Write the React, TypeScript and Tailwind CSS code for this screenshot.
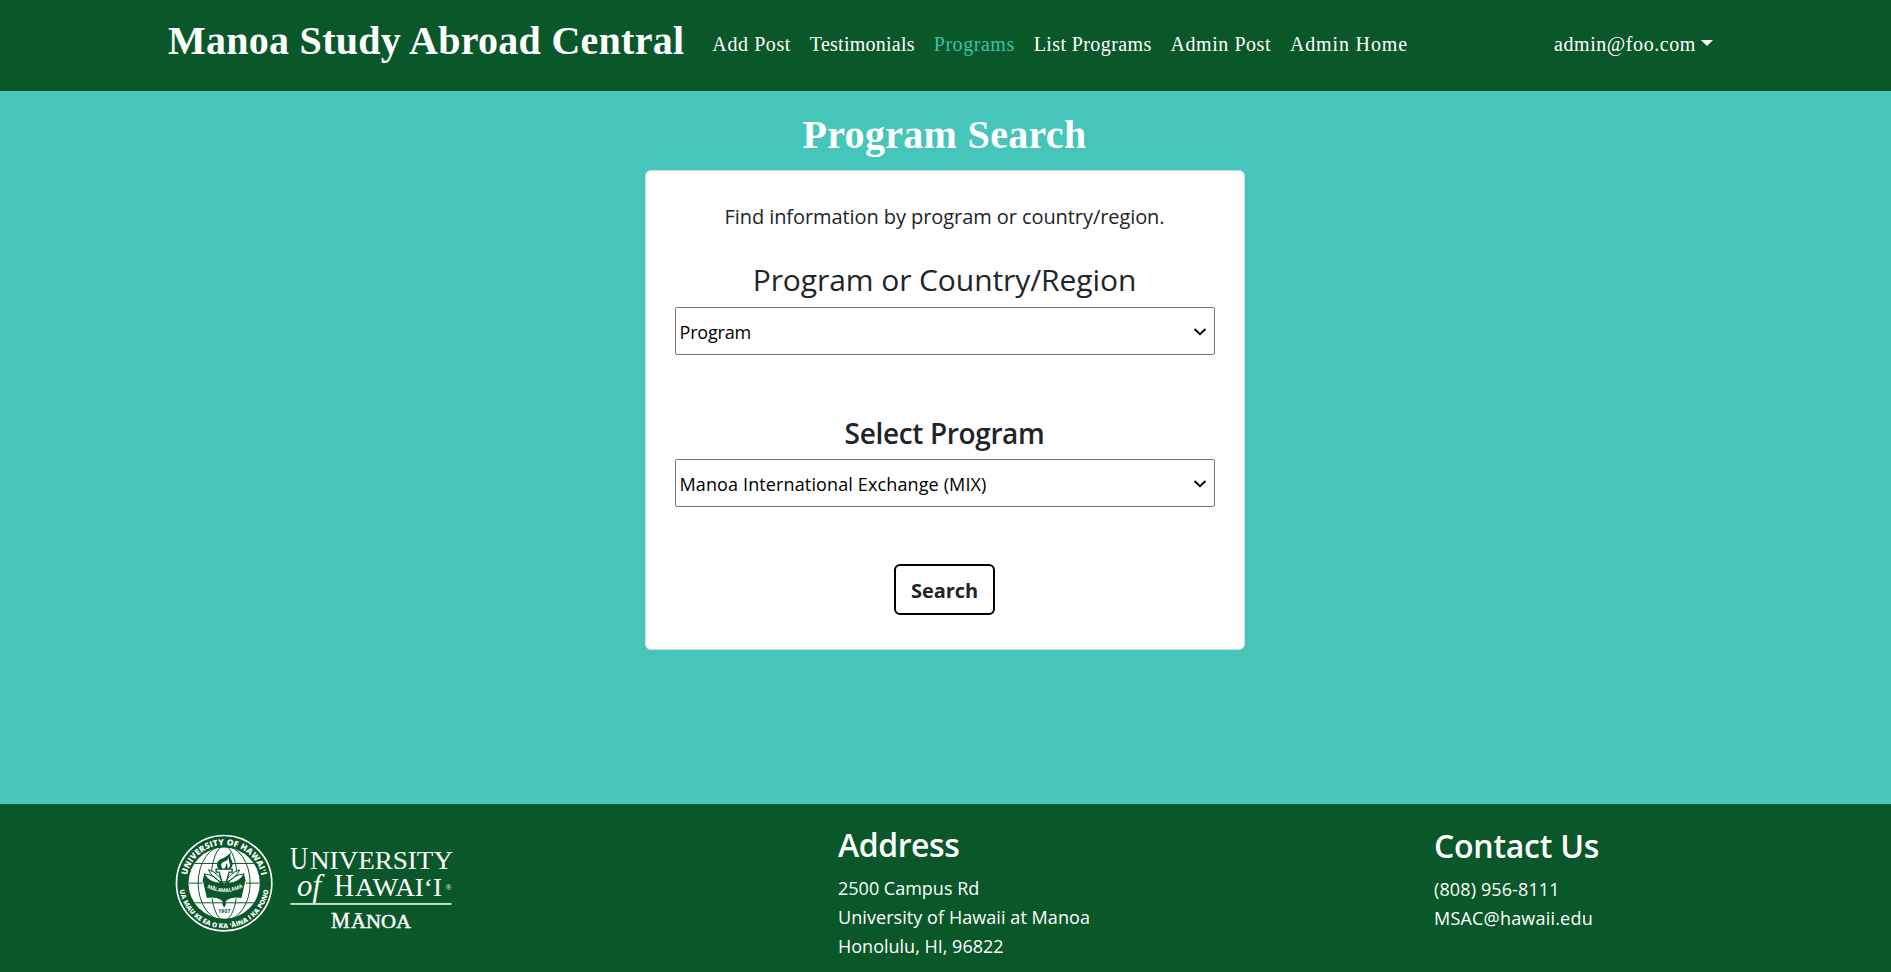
import React from "react";

const links = [
  { label: "Add Post", cls: "tracking-[0.587px] text-white" },
  { label: "Testimonials", cls: "tracking-[0.256px] text-white" },
  { label: "Programs", cls: "tracking-[0.542px] text-[#3fbfa8]" },
  { label: "List Programs", cls: "tracking-[0.402px] text-white" },
  { label: "Admin Post", cls: "tracking-[0.548px] text-white" },
  { label: "Admin Home", cls: "tracking-[0.857px] text-white" },
];

function NavBar() {
  return (
    <header className="flex h-[91px] items-start bg-[#0a5829] pl-[168px] font-['Liberation_Serif',serif] text-white">
      <a className="mt-[17px] text-[40px] leading-[48px] font-bold tracking-[0.27px] whitespace-nowrap">
        Manoa Study Abroad Central
      </a>
      <nav className="mt-[29px] ml-7 flex gap-[18.9px] text-xl leading-[30px] whitespace-nowrap">
        {links.map((l) => (
          <a key={l.label} className={l.cls}>
            {l.label}
          </a>
        ))}
      </nav>
      <button className="mt-[29px] mr-[178px] ml-auto flex text-xl leading-[30px] tracking-[0.577px]">
        admin@foo.com
        <span className="mt-[11px] ml-[5px] h-0 w-0 border-x-6 border-t-6 border-x-transparent border-t-white" />
      </button>
    </header>
  );
}

function SelectBox({ value, cls }: { value: string; cls: string }) {
  return (
    <div className="flex h-12 items-center justify-between rounded-[2px] border border-[#767676] bg-white pr-[7px] pl-1 text-lg text-black">
      <span className={cls}>{value}</span>
      <svg className="mt-px" width="14" height="10" viewBox="0 0 14 10" fill="none" stroke="black" strokeWidth="2">
        <path d="M1.5 2 L7 7.2 L12.5 2" />
      </svg>
    </div>
  );
}

function Seal() {
  return (
    <g transform="translate(-0.2 -0.2) scale(0.33333)">
      <defs>
        <path id="arc-top" d="M49 166 A114 114 0 0 1 277 166" />
        <path id="arc-bottom" d="M28 166 A135 135 0 0 0 298 166" />
        <clipPath id="globe">
          <circle cx="163" cy="166" r="107" />
        </clipPath>
      </defs>
      <circle cx="163" cy="166" r="143" fill="none" stroke="white" strokeWidth="5" />
      <circle cx="163" cy="166" r="107" fill="white" />
      <g clipPath="url(#globe)" fill="none" stroke="#0a5829" strokeWidth="3">
        <path d="M70 107H256M56 166H270M70 225H256" />
        <ellipse cx="163" cy="166" rx="78" ry="112" />
        <ellipse cx="163" cy="166" rx="40" ry="112" />
      </g>
      <path d="M102 138 L98 160 L110 212 Q146 206 163 226 Q180 206 216 212 L228 160 L224 138 L163 166Z" fill="#0a5829" stroke="white" strokeWidth="3" />
      <path d="M98 160 Q140 158 163 180 Q186 158 228 160 L222 138 Q188 146 163 168 Q138 146 104 138Z" fill="#0a5829" />
      <path d="M116 126 Q148 136 158 164 Q128 152 116 126Z M210 126 Q178 136 168 164 Q198 152 210 126Z M103 138 Q138 142 152 167 Q116 164 103 138Z M223 138 Q188 142 174 167 Q210 164 223 138Z" fill="white" stroke="#0a5829" strokeWidth="3" />
      <path d="M139 124 H187 V133 H178 L170 162 H156 L148 133 H139Z" fill="white" stroke="#0a5829" strokeWidth="4" />
      <path d="M146 124 Q134 104 152 94 Q172 88 184 72 Q178 86 186 98 Q194 114 180 124Z" fill="#0a5829" />
      <path d="M158 122 Q148 108 162 102 Q176 98 177 88 Q176 100 180 108 Q184 118 172 122 Q176 112 169 106 Q170 114 164 122Z" fill="white" />
      <path id="motto-line" d="M108 178 Q163 208 220 178" fill="none" />
      <text fontSize="16" fontWeight="700" fill="white" fontFamily="Open Sans, sans-serif">
        <textPath href="#motto-line" startOffset="4" textLength="112" lengthAdjust="spacingAndGlyphs">MĀLAMALAMA</textPath>
      </text>
      <path d="M158 212 L163 216 L168 212 V230 L163 240 L158 230Z" fill="#0a5829" />
      <rect x="143" y="242" width="40" height="17" fill="white" />
      <text x="145" y="257" fontSize="15" fontWeight="700" textLength="37" fill="#0a5829" fontFamily="Open Sans, sans-serif">
        1907
      </text>
      <text fontSize="25" fontWeight="800" fill="white" fontFamily="Open Sans, sans-serif">
        <textPath href="#arc-top" startOffset="24" textLength="311">UNIVERSITY OF HAWAIʻI</textPath>
      </text>
      <text fontSize="20" fontWeight="800" fill="white" fontFamily="Open Sans, sans-serif">
        <textPath href="#arc-bottom" startOffset="21" textLength="382">UA MAU KE EA O KA ʻĀINA I KA PONO</textPath>
      </text>
    </g>
  );
}

function Logo() {
  return (
    <svg className="mt-6 block" width="290" height="110" viewBox="0 0 290 110">
      <Seal />
      <g fill="white" fontFamily="Liberation Serif, serif">
        <text y="40.7" x="120" fontSize="31" textLength="18" lengthAdjust="spacingAndGlyphs">U</text>
        <text y="40.7" x="140" fontSize="25.5" textLength="143" lengthAdjust="spacingAndGlyphs">NIVERSITY</text>
        <text y="67.7" x="127" fontSize="31" fontStyle="italic" textLength="24" lengthAdjust="spacingAndGlyphs">of</text>
        <text y="67.7" x="164" fontSize="31" textLength="20" lengthAdjust="spacingAndGlyphs">H</text>
        <text y="67.7" x="185" fontSize="25.5" textLength="87" lengthAdjust="spacingAndGlyphs">AWAIʻI</text>
        <text y="62" x="275.5" fontSize="8">®</text>
        <rect x="120.5" y="75.2" width="161" height="1.5" />
        <g stroke="white" strokeWidth="0.4">
          <text y="99.7" x="161" fontSize="23" textLength="19" lengthAdjust="spacingAndGlyphs">M</text>
          <text y="99.7" x="181" fontSize="19.5" textLength="60" lengthAdjust="spacingAndGlyphs">ĀNOA</text>
        </g>
      </g>
    </svg>
  );
}

export default function App() {
  return (
    <div className="flex h-[972px] flex-col overflow-hidden bg-[#46c5bb] font-['Open_Sans','Noto_Sans',sans-serif] text-[#212529]">
      <NavBar />
      <main className="flex flex-1 flex-col items-center pr-[2px]">
        <h1 className="mt-5 font-['Liberation_Serif',serif] text-[40px] leading-[48px] font-bold tracking-[0.316px] text-white">
          Program Search
        </h1>
        <section className="mt-[11px] flex h-[480px] w-[600px] flex-col rounded-md border border-[#cfe0de] bg-white px-[29px] pt-[31px] text-center">
          <p className="text-xl leading-[30px] tracking-[-0.075px]">Find information by program or country/region.</p>
          <h2 className="mt-[30px] mb-[9px] text-[30px] leading-9 tracking-[-0.08px]">Program or Country/Region</h2>
          <SelectBox value="Program" cls="pt-px tracking-[-0.187px]" />
          <h3 className="mt-[61px] mb-[9px] text-[28px] leading-[34px] font-semibold tracking-[-0.35px]">Select Program</h3>
          <SelectBox value="Manoa International Exchange (MIX)" cls="pt-px tracking-[0.127px]" />
          <button className="mt-[57px] h-[51px] w-[101px] self-center rounded-md border-2 border-black pt-[3px] text-xl font-bold tracking-[-0.07px]">
            Search
          </button>
        </section>
      </main>
      <footer className="flex h-[168px] shrink-0 items-start bg-[#0a5829] text-lg leading-[29px] text-white">
        <div className="w-[838px] pl-[170px]">
          <Logo />
        </div>
        <div className="w-[596px] pt-[22px]">
          <h4 className="mb-[10px] text-[32px] leading-[38px] font-semibold tracking-[-0.45px]">Address</h4>
          <p>2500 Campus Rd</p>
          <p className="tracking-[0.066px]">University of Hawaii at Manoa</p>
          <p>Honolulu, HI, 96822</p>
        </div>
        <div className="pt-[23px]">
          <h4 className="mb-[10px] text-[32px] leading-[38px] font-semibold tracking-[-0.25px]">Contact Us</h4>
          <p className="tracking-[0.12px]">(808) 956-8111</p>
          <p className="tracking-[0.2px]">MSAC@hawaii.edu</p>
        </div>
      </footer>
    </div>
  );
}
